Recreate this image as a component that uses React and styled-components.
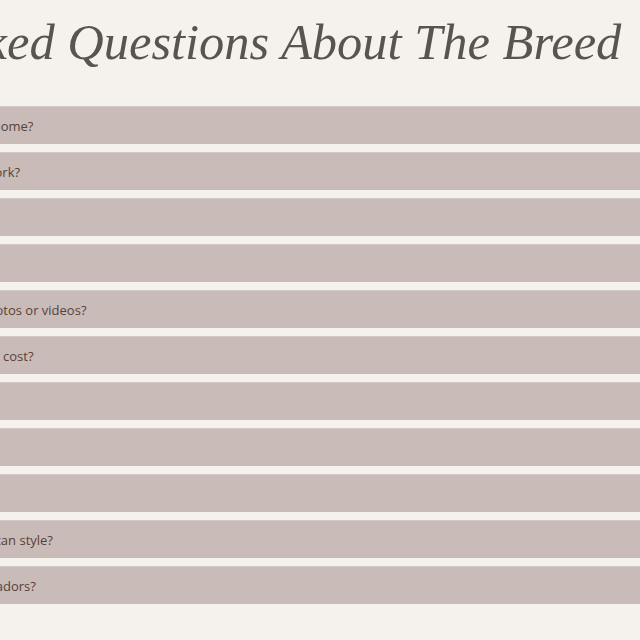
import styled, { createGlobalStyle } from "styled-components";

const GlobalStyle = createGlobalStyle`
  html, body {
    margin: 0;
    padding: 0;
    background: #f5f2ee;
    overflow: hidden;
  }
`;

const questions = [
  "When can puppies go home?",
  "How do the waitlists work?",
  "Do you ship puppies?",
  "Can I visit the litter?",
  "Will I receive puppy photos or videos?",
  "How much will a puppy cost?",
  "What is included?",
  "Are the parents tested?",
  "Is there a guarantee?",
  "Are the puppies American style?",
  "Do you breed red Labradors?",
];

export default function App() {
  return (
    <>
      <GlobalStyle />
      <Viewport>
        <Section>
          <Title>Frequently Asked Questions About The Breed</Title>
          <List>
            {questions.map((q) => (
              <Item key={q}>
                <Question>{q}</Question>
              </Item>
            ))}
          </List>
        </Section>
      </Viewport>
    </>
  );
}

const Viewport = styled.div`
  width: 640px;
  height: 640px;
  overflow: hidden;
`;

// the shot is a scrolled crop of a wider page
const Section = styled.section`
  width: 980px;
  margin-left: -328px;
  padding-top: 12px;
`;

const Title = styled.h2`
  margin: 0;
  font-family: "Liberation Serif", "Times New Roman", serif;
  font-style: italic;
  font-weight: 400;
  font-size: 50.5px;
  line-height: 60px;
  color: #57554e;
  text-align: center;
  white-space: nowrap;
`;

const List = styled.div`
  display: flex;
  flex-direction: column;
  gap: 8px;
  margin-top: 34px;
`;

const Item = styled.div`
  height: 38px;
  display: flex;
  align-items: center;
  padding-left: 187px;
  background: #c9bcb8;
  border-top: 1px solid #d3c9c5;
  box-sizing: border-box;
`;

const Question = styled.span`
  font-family: "Open Sans", "Noto Sans", sans-serif;
  font-size: 13px;
  color: #5a4038;
  white-space: nowrap;
`;
